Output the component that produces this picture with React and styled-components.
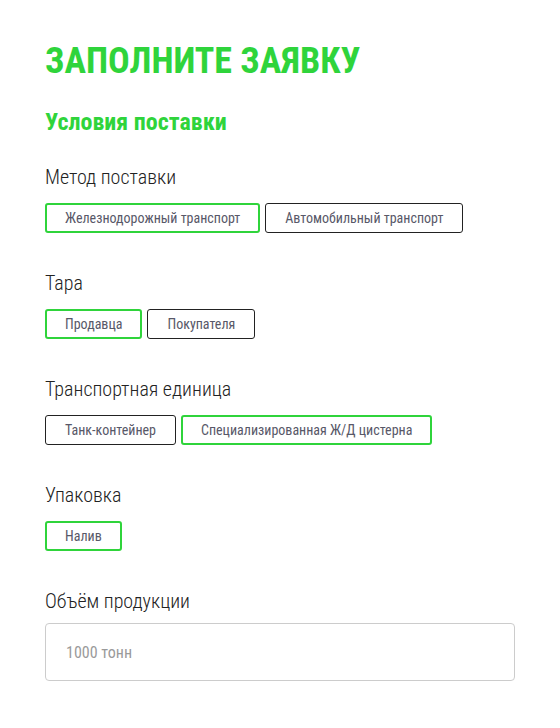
import React, { useState } from 'react';
import styled, { createGlobalStyle } from 'styled-components';

const GREEN = '#2fd43b';

const GlobalStyle = createGlobalStyle`
  body {
    margin: 0;
    background: #fff;
    font-family: Roboto, "Liberation Sans", sans-serif;
    font-stretch: 75%;
    font-variation-settings: 'wdth' 75;
  }
`;

const Page = styled.div`
  padding: 39px 45px 40px;
  width: 470px;
`;

const Title = styled.h1`
  margin: 0 0 25px;
  font-size: 36px;
  line-height: 44px;
  font-weight: 700;
  color: ${GREEN};
  text-transform: uppercase;
`;

const Subtitle = styled.h2`
  margin: 0 0 28px;
  font-size: 24px;
  line-height: 29px;
  font-weight: 700;
  color: ${GREEN};
`;

const Group = styled.div`
  margin-bottom: 38px;
`;

const Label = styled.div`
  font-size: 20px;
  line-height: 24px;
  font-weight: 300;
  color: #222;
  margin-bottom: ${({tight}) => tight ? '10px' : '14px'};
`;

const Options = styled.div`
  display: flex;
  gap: 5px;
`;

const Option = styled.button`
  box-sizing: border-box;
  height: 30px;
  padding: 0 ${({active}) => active ? '18px' : '19px'};
  border: ${({active}) => active ? `2px solid ${GREEN}` : '1px solid #222'};
  border-radius: 3px;
  background: #fff;
  font-family: inherit;
  font-stretch: inherit;
  font-variation-settings: inherit;
  font-size: 14px;
  color: #585868;
  cursor: pointer;
`;

const Input = styled.input`
  box-sizing: border-box;
  width: 470px;
  height: 58px;
  padding: 0 20px;
  border: 1px solid #ccc;
  border-radius: 4px;
  font-family: inherit;
  font-stretch: inherit;
  font-variation-settings: inherit;
  font-size: 16px;
  color: #333;
  &::placeholder {
    color: #9a9a9a;
  }
`;

const groups = [
  { label: 'Метод поставки', options: ['Железнодорожный транспорт', 'Автомобильный транспорт'], active: 0 },
  { label: 'Тара', options: ['Продавца', 'Покупателя'], active: 0 },
  { label: 'Транспортная единица', options: ['Танк-контейнер', 'Специализированная Ж/Д цистерна'], active: 1 },
  { label: 'Упаковка', options: ['Налив'], active: 0 },
];

const ChoiceGroup = ({label, options, active}) => {
  const [current, setCurrent] = useState(active)
  return (
    <Group>
      <Label>{label}</Label>
      <Options>
        {options.map((o, i) => (
          <Option key={o} active={i === current} onClick={() => setCurrent(i)}>{o}</Option>
        ))}
      </Options>
    </Group>
  )
}

const App = () => {
  return (
    <>
      <GlobalStyle />
      <Page>
        <Title>Заполните заявку</Title>
        <Subtitle>Условия поставки</Subtitle>
        {groups.map(g => <ChoiceGroup key={g.label} {...g} />)}
        <Label tight>Объём продукции</Label>
        <Input placeholder="1000 тонн" />
      </Page>
    </>
  )
}

export default App
